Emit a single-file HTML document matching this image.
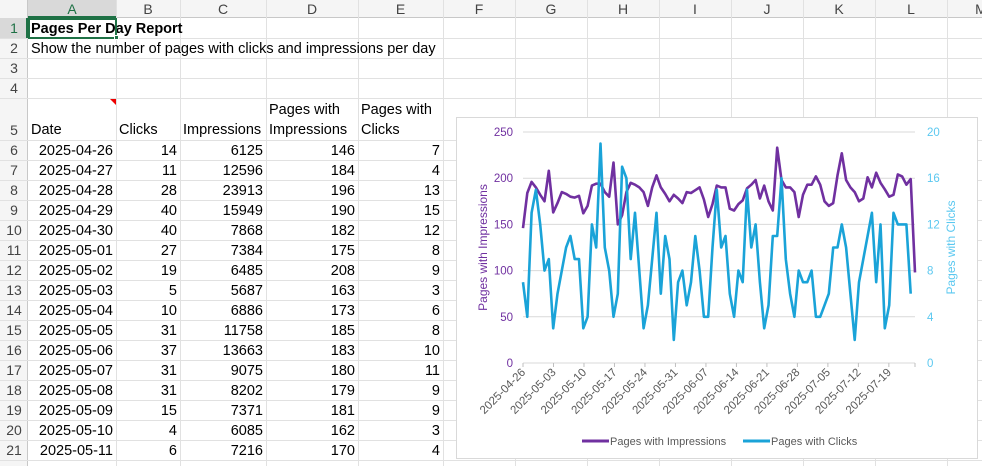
<!DOCTYPE html>
<html><head><meta charset="utf-8"><style>
*{margin:0;padding:0;box-sizing:border-box}
body{width:982px;height:466px;overflow:hidden;background:#fff;font-family:"Liberation Sans",Arial,sans-serif;font-size:14.5px;color:#000;position:relative}
.v{position:absolute;top:0;width:1px;height:466px;background:#e1e1e1}
.hl{position:absolute;left:0;height:1px;width:982px;background:#e1e1e1}
.t{position:absolute;white-space:nowrap;line-height:20px;height:20px}
.hd{position:absolute;top:0;height:18px;line-height:18px;text-align:center;color:#444;font-size:14px}
.rn{position:absolute;left:0;width:28px;text-align:center;color:#444;font-size:14px;line-height:20px}
#chart{position:absolute;left:456px;top:117px;width:522px;height:342px;background:#fff;border:1px solid #d9d9d9}
</style></head><body>
<div style="position:absolute;left:0;top:0;width:982px;height:18px;background:#f5f5f5;border-bottom:1px solid #c8c8c8"></div>
<div style="position:absolute;left:0;top:0;width:28px;height:466px;background:#f5f5f5;border-right:1px solid #c8c8c8"></div>
<div style="position:absolute;left:28px;top:0;width:88px;height:18px;background:#d9d9d9;border-bottom:2px solid #1e7145"></div>
<div style="position:absolute;left:0;top:18px;width:28px;height:20px;background:#d9d9d9;border-right:2px solid #1e7145"></div>
<div id="grid"></div>
<div style="position:absolute;left:28px;top:18px;width:89px;height:21px;border:2px solid #1e7145"></div>
<div style="position:absolute;left:114px;top:35px;width:5px;height:5px;background:#1e7145;border:1px solid #fff"></div>
<div style="position:absolute;left:110px;top:99px;width:0;height:0;border-left:6px solid transparent;border-top:6px solid #e00"></div>
<div id="chart"></div>
<script>
var cols=[28,116,180,266,358,443,515,587,659,731,803,875,947];
var rows=[18,38,58,78,98,140];for(var i=1;i<=16;i++)rows.push(140+20*i);
var g="";
cols.forEach(function(x,i){if(i>0)g+='<div class="v" style="left:'+x+'px"></div>'});
rows.forEach(function(y,i){if(i>0)g+='<div class="hl" style="top:'+y+'px"></div>'});
var L="ABCDEFGHIJKLM";
for(var i=0;i<13;i++){var a=cols[i],b=cols[i+1]||1015;g+='<div class="hd" style="left:'+a+'px;width:'+(b-a)+'px;'+(i==0?'color:#1e7145':'')+'">'+L[i]+'</div>'}
for(var r=0;r<21;r++){var top=rows[r],bot=rows[r+1];g+='<div class="rn" style="top:'+(bot-20)+'px;'+(r==0?'color:#1e7145':'')+'">'+(r+1)+'</div>'}
function t(x,y,s,st){g+='<div class="t" style="left:'+x+'px;top:'+y+'px;'+(st||'')+'">'+s+'</div>'}
t(31,19,'Pages Per Day Report','font-weight:bold');
t(31,39,'Show the number of pages with clicks and impressions per day');
t(31,120,'Date');t(119,120,'Clicks');t(183,120,'Impressions');t(269,100,'Pages with');t(269,120,'Impressions');t(361,100,'Pages with');t(361,120,'Clicks');
var d=[["2025-04-26",14,6125,146,7],["2025-04-27",11,12596,184,4],["2025-04-28",28,23913,196,13],["2025-04-29",40,15949,190,15],["2025-04-30",40,7868,182,12],["2025-05-01",27,7384,175,8],["2025-05-02",19,6485,208,9],["2025-05-03",5,5687,163,3],["2025-05-04",10,6886,173,6],["2025-05-05",31,11758,185,8],["2025-05-06",37,13663,183,10],["2025-05-07",31,9075,180,11],["2025-05-08",31,8202,179,9],["2025-05-09",15,7371,181,9],["2025-05-10",4,6085,162,3],["2025-05-11",6,7216,170,4]];
d.forEach(function(r,i){var y=141+20*i;for(var c=0;c<5;c++){var R=cols[c+1]-3;g+='<div class="t" style="right:'+(982-R)+'px;top:'+y+'px">'+r[c]+'</div>'}});
document.getElementById('grid').innerHTML=g;
var imp=[146,184,196,190,182,175,208,163,173,185,183,180,179,181,162,170,192,194,194,185,180,217,150,160,185,195,193,190,185,170,190,203,190,183,175,182,178,173,185,184,187,190,177,158,172,192,190,190,167,165,172,176,189,193,198,178,192,175,165,233,198,190,190,185,158,182,193,193,202,193,175,170,173,203,227,198,190,185,175,178,201,190,206,195,188,180,182,204,202,193,199,98];
var clk=[7,4,13,15,12,8,9,3,6,8,10,11,9,9,3,4,12,10,19,10,8,4,6,17,16,9,13,8,3,5,9,13,6,11,9,2,7,8,5,7,11,8,4,4,10,15,10,11,6,4,8,7,15,10,12,7,3,5,11,11,16,9,6,4,8,7,7,8,4,4,5,6,10,10,12,10,6,2,7,9,11,13,7,12,3,5,13,12,12,12,6];
var X0=522-456,X1=914-456,T=131-117,B=362-117,n=imp.length;
function px(i){return X0+(X1-X0)*i/(n-1)}
var s='<svg width="522" height="342" xmlns="http://www.w3.org/2000/svg" font-family="Liberation Sans,Arial,sans-serif">';
for(var k=0;k<=5;k++){var y=B-(B-T)*k/5;s+='<line x1="'+X0+'" x2="'+X1+'" y1="'+y+'" y2="'+y+'" stroke="#d9d9d9"/>';
s+='<text x="'+(X0-10)+'" y="'+(y+4)+'" fill="#7030a0" font-size="11.5" text-anchor="end">'+(k*50)+'</text>';
s+='<text x="'+(X1+12)+'" y="'+(y+4)+'" fill="#5bc8f0" font-size="11.5">'+(k*4)+'</text>';}
var dates=["2025-04-26","2025-05-03","2025-05-10","2025-05-17","2025-05-24","2025-05-31","2025-06-07","2025-06-14","2025-06-21","2025-06-28","2025-07-05","2025-07-12","2025-07-19"];
dates.forEach(function(t,j){var x=X0+(X1-X0)*7*j/90;s+='<line x1="'+x+'" x2="'+x+'" y1="'+B+'" y2="'+(B+4)+'" stroke="#bfbfbf"/>';
s+='<text transform="translate('+(x+3)+','+(B+10)+') rotate(-45)" fill="#595959" font-size="11.5" text-anchor="end">'+t+'</text>'});
s+='<line x1="'+X1+'" x2="'+X1+'" y1="'+B+'" y2="'+(B+4)+'" stroke="#bfbfbf"/>';
function pl(a,m,c){var p=a.map(function(v,i){return px(i).toFixed(1)+','+(B-(B-T)*v/m).toFixed(1)}).join(' ');return '<polyline points="'+p+'" fill="none" stroke="'+c+'" stroke-width="2.6" stroke-linejoin="round"/>'}
s+=pl(imp,250,'#7030a0')+pl(clk,20,'#1aa3d8');
s+='<text transform="translate(30,'+((T+B)/2)+') rotate(-90)" fill="#7030a0" font-size="12" text-anchor="middle">Pages with Impressions</text>';
s+='<text transform="translate(498,'+((T+B)/2)+') rotate(-90)" fill="#5bc8f0" font-size="12" text-anchor="middle">Pages with Clicks</text>';
s+='<line x1="125" x2="152" y1="323" y2="323" stroke="#7030a0" stroke-width="3"/><text x="153" y="327" fill="#595959" font-size="11">Pages with Impressions</text>';
s+='<line x1="286" x2="313" y1="323" y2="323" stroke="#1aa3d8" stroke-width="3"/><text x="314" y="327" fill="#595959" font-size="11">Pages with Clicks</text>';
s+='</svg>';document.getElementById('chart').innerHTML=s;
</script>
</body></html>
